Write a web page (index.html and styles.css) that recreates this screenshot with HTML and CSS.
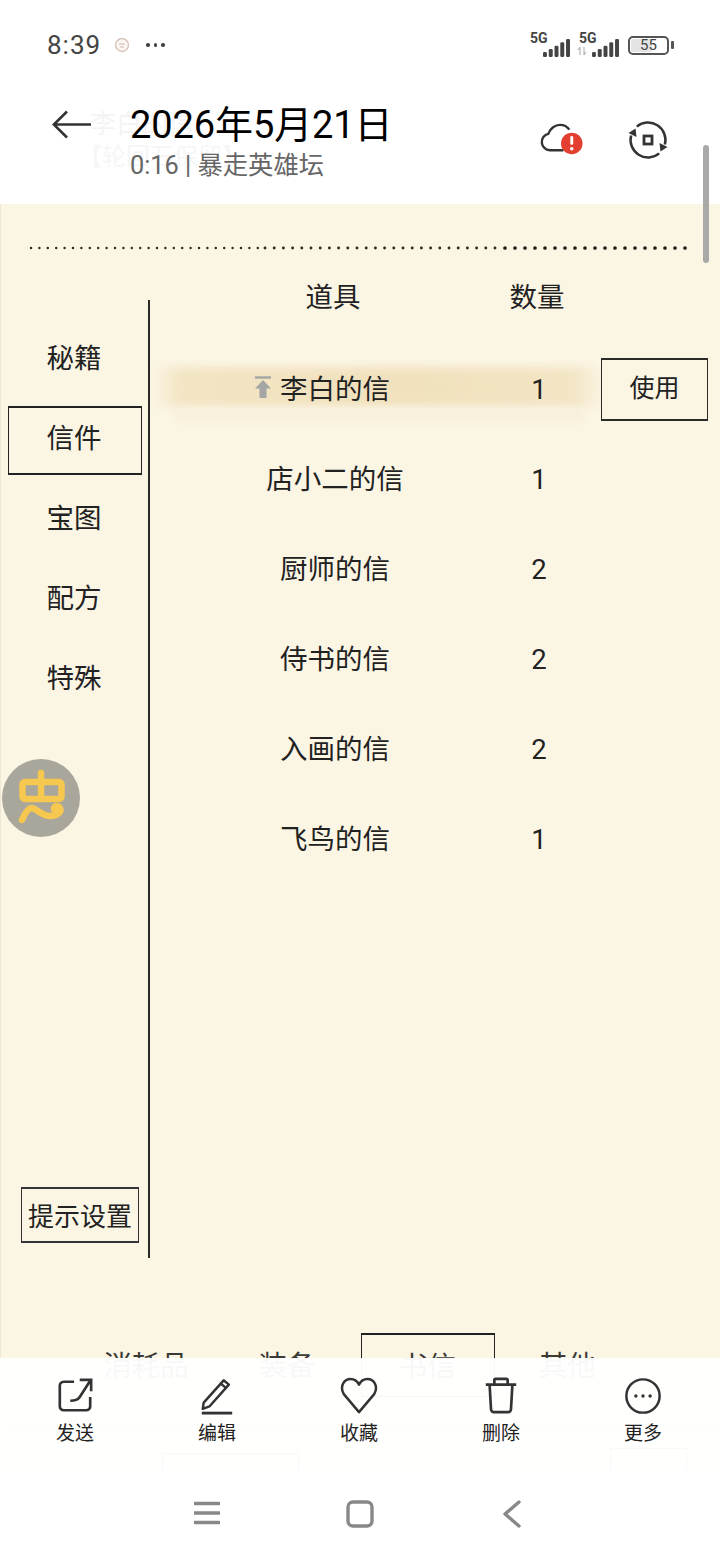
FILE: index.html
```html
<!DOCTYPE html>
<html lang="zh-CN">
<head>
<meta charset="utf-8">
<title>2026年5月21日</title>
<link rel="stylesheet" href="styles.css">
</head>
<body>
<div class="phone">
  <div class="status">
    <div class="status-left">
      <span class="clock">8:39</span>
      <svg class="app-dot" viewBox="0 0 18 18"><circle cx="9" cy="9" r="6.500" fill="#fbf6f2" stroke="#d8c4bc" stroke-width="1.400"/><path d="M6 8h6M7 11h4" stroke="#cfb8ae" stroke-width="1"/></svg>
      <span class="more-dots"><i></i><i></i><i></i></span>
    </div>
    <div class="status-right">
      <span class="sim"><b>5G</b>
        <svg class="bars" viewBox="0 0 30 20"><rect x="0" y="14.500" width="4.400" height="5.500" rx="1.500"/><rect x="6.400" y="11" width="4.400" height="9" rx="1.500"/><rect x="12.800" y="7.500" width="4.400" height="12.500" rx="1.500"/><rect x="19.200" y="3.500" width="4.400" height="16.500" rx="1.500"/><rect x="25.600" y="0" width="4.400" height="20" rx="1.500"/></svg>
      </span>
      <span class="sim"><b>5G</b>
        <svg class="bars" viewBox="0 0 30 20"><rect x="0" y="14.500" width="4.400" height="5.500" rx="1.500"/><rect x="6.400" y="11" width="4.400" height="9" rx="1.500"/><rect x="12.800" y="7.500" width="4.400" height="12.500" rx="1.500"/><rect x="19.200" y="3.500" width="4.400" height="16.500" rx="1.500"/><rect x="25.600" y="0" width="4.400" height="20" rx="1.500"/></svg>
        <svg class="updown" viewBox="0 0 10 10"><path d="M3 1v8M3 1 1 4M7 9V1M7 9l2-3" fill="none" stroke="#b5b5b5" stroke-width="1.200"/></svg>
      </span>
      <span class="battery"><span class="battery-fill"></span><span class="battery-num">55</span></span>
      <span class="battery-cap"></span>
    </div>
  </div>

  <header class="topbar">
    <span class="ghost-title">李白的信</span>
    <span class="ghost-sub">【轮回石保留】</span>
    <svg class="back" viewBox="0 0 40 30"><path d="M39 14.500H2M15 1.500 1.800 14.500 15 27.500" fill="none" stroke="#333" stroke-width="2.600"/></svg>
    <div class="heading">
      <h1>2026年5月21日</h1>
      <p>0:16 | 暴走英雄坛</p>
    </div>
    <div class="top-actions">
      <svg class="cloud" viewBox="0 0 44 32"><path d="M24 27.500H10a8.500 8.500 0 0 1-1.500-16.800C10.500 5 15.500 1.500 20.500 1.500c4 0 7.500 2 9.500 5" fill="none" stroke="#333" stroke-width="2.400"/><circle cx="32.500" cy="20.500" r="11" fill="#e23f30"/><rect x="31" y="13" width="3" height="9" rx="1.400" fill="#fff"/><circle cx="32.500" cy="26" r="1.800" fill="#fff"/></svg>
      <svg class="rotate" viewBox="0 0 40 40"><path d="M8.800 6.600A17.500 17.500 0 0 1 36.900 24.500M31.200 33.400A17.500 17.500 0 0 1 3.100 15.500" fill="none" stroke="#333" stroke-width="2.500"/><path d="M31.500 23 39.500 27 32.500 31.500zM8.500 17 .5 13 7.500 8.500z" fill="#333"/><rect x="16" y="16" width="8" height="8" fill="none" stroke="#333" stroke-width="2.800"/></svg>
    </div>
  </header>

  <main class="game">
    <svg class="dots" viewBox="0 0 662 6" preserveAspectRatio="none">
      <line x1="2" y1="3" x2="230" y2="3" stroke="#2b2a26" stroke-width="2.400" stroke-linecap="round" stroke-dasharray="0 8.400"/>
      <line x1="236" y1="3" x2="470" y2="3" stroke="#2b2a26" stroke-width="2.900" stroke-linecap="round" stroke-dasharray="0 9.200"/>
      <line x1="476" y1="3" x2="661" y2="3" stroke="#1f1e1a" stroke-width="3.700" stroke-linecap="round" stroke-dasharray="0 10"/>
    </svg>
    <div class="columns">
      <nav class="side">
        <ul class="side-list">
          <li class="side-item">秘籍</li>
          <li class="side-item side-active">信件</li>
          <li class="side-item">宝图</li>
          <li class="side-item">配方</li>
          <li class="side-item">特殊</li>
        </ul>
        <div class="hint">提示设置</div>
      </nav>
      <section class="table">
        <div class="row-head">
          <span class="col-name">道具</span>
          <span class="col-num">数量</span>
        </div>
        <div class="row row-selected">
          <span class="wash"></span>
          <span class="wash-low"></span>
          <span class="col-name"><svg class="pin" viewBox="0 0 18 22"><path d="M1 1.500h16" stroke="#a4a6a4" stroke-width="2.400"/><path d="M9 4 17 12.500H12.500V22h-7V12.500H1z" fill="#a4a6a4"/></svg>李白的信</span>
          <span class="col-num">1</span>
          <span class="use">使用</span>
        </div>
        <div class="row"><span class="col-name">店小二的信</span><span class="col-num">1</span></div>
        <div class="row"><span class="col-name">厨师的信</span><span class="col-num">2</span></div>
        <div class="row"><span class="col-name">侍书的信</span><span class="col-num">2</span></div>
        <div class="row"><span class="col-name">入画的信</span><span class="col-num">2</span></div>
        <div class="row"><span class="col-name">飞鸟的信</span><span class="col-num">1</span></div>
      </section>
    </div>
    <div class="tabs">
      <span class="tab">消耗品</span>
      <span class="tab">装备</span>
      <span class="tab tab-active">书信</span>
      <span class="tab">其他</span>
    </div>
    <div class="under-row">
      <span class="under-box under-a"></span>
      <span class="under-box under-b"></span>
    </div>
  </main>

  <svg class="bug" viewBox="0 0 78 78">
    <circle cx="39" cy="39" r="39" fill="#a9a69b"/>
    <path d="M39 14V40M23 23H57a2.500 2.500 0 0 1 2.500 2.500V37.500a2.500 2.500 0 0 1-2.500 2.500H23a2.500 2.500 0 0 1-2.500-2.500V25.500A2.500 2.500 0 0 1 23 23zM20 61C23 54 26 49 30 49 35 50 40 57 48 57 55 57 60 53 58 49 56 46 52 47 52 50" fill="none" stroke="#f6c850" stroke-width="6.500" stroke-linecap="round" stroke-linejoin="round"/>
  </svg>

  <div class="scrollbar"></div>

  <div class="dock">
    <div class="toolbar">
      <div class="tool">
        <svg viewBox="0 0 40 40"><path d="M19 5H8a4 4 0 0 0-4 4v22a4 4 0 0 0 4 4h24a4 4 0 0 0 4-4V21" fill="none" stroke="#333" stroke-width="2.800"/><path d="M15 25c5 0 8-1 10-4L36 4M25 3h12v12" fill="none" stroke="#333" stroke-width="2.800"/></svg>
        <span>发送</span>
      </div>
      <div class="tool">
        <svg viewBox="0 0 40 40"><path d="M6 27 27 3.500l5.500 4.500L12 31l-7 2.500zM24 7l6 5" fill="none" stroke="#333" stroke-width="2.600" stroke-linejoin="round"/><path d="M4 38H36" stroke="#333" stroke-width="3"/></svg>
        <span>编辑</span>
      </div>
      <div class="tool">
        <svg viewBox="0 0 40 40"><path d="M20 37 4 18C-1 9 5 2 11 2c4 0 7 2 9 6 2-4 5-6 9-6 6 0 12 7 7 16z" fill="none" stroke="#333" stroke-width="2.600" stroke-linejoin="round"/></svg>
        <span>收藏</span>
      </div>
      <div class="tool">
        <svg viewBox="0 0 40 40"><path d="M4 8H36M13 8V3.500a1.500 1.500 0 0 1 1.500-1.500h11A1.500 1.500 0 0 1 27 3.500V8M8 8l1.500 26a3 3 0 0 0 3 3h15a3 3 0 0 0 3-3L32 8" fill="none" stroke="#333" stroke-width="2.800"/></svg>
        <span>删除</span>
      </div>
      <div class="tool">
        <svg viewBox="0 0 40 40"><circle cx="20" cy="20" r="17.500" fill="none" stroke="#333" stroke-width="2.600"/><circle cx="12.500" cy="20" r="1.800" fill="#333"/><circle cx="20" cy="20" r="1.800" fill="#333"/><circle cx="27.500" cy="20" r="1.800" fill="#333"/></svg>
        <span>更多</span>
      </div>
    </div>
    <div class="navbar">
      <svg class="nav-menu" viewBox="0 0 26 24"><path d="M1 2.500H25M1 12H25M1 21.500H25" stroke="#888" stroke-width="3.400" stroke-linecap="round"/></svg>
      <svg class="nav-home" viewBox="0 0 28 28"><rect x="2" y="2" width="24" height="24" rx="5" fill="none" stroke="#888" stroke-width="3.400"/></svg>
      <svg class="nav-back" viewBox="0 0 20 28"><path d="M17 2 3 14 17 26" fill="none" stroke="#888" stroke-width="3.400" stroke-linecap="round" stroke-linejoin="round"/></svg>
    </div>
  </div>
</div>
</body>
</html>
```
FILE: styles.css
```css
* { box-sizing: border-box; }
html, body { margin: 0; padding: 0; }
body {
  background: #fff;
  font-family: Roboto, "Noto Sans CJK SC", "Liberation Sans", sans-serif;
  color: #222;
}
.phone {
  position: relative;
  width: 720px;
  height: 1559px;
  overflow: hidden;
  display: flex;
  flex-direction: column;
  background: #fff;
}

/* status bar */
.status {
  height: 90px;
  flex: none;
  display: flex;
  justify-content: space-between;
  align-items: center;
  padding: 0 46px 0 47px;
}
.status-left { display: flex; align-items: center; }
.clock { font-size: 26px; color: #444; letter-spacing: 1px; width: 66px; }
.app-dot { width: 18px; height: 18px; }
.more-dots { display: flex; gap: 4px; margin-left: 15px; }
.more-dots i { width: 3.500px; height: 3.500px; border-radius: 50%; background: #444; }
.status-right { display: flex; align-items: center; }
.sim { position: relative; display: block; width: 41px; height: 22px; margin-right: 8px; }
.sim b {
  position: absolute; left: 0; top: -3px;
  font-size: 14px; line-height: 14px; font-weight: 700; color: #444;
  font-family: Roboto, sans-serif;
}
.bars { position: absolute; right: 0; bottom: -1px; width: 29px; height: 18px; fill: #444; }
.updown { position: absolute; left: -2px; bottom: 0; width: 10px; height: 10px; }
.battery {
  position: relative;
  width: 41px; height: 19px;
  border: 2px solid #555;
  border-radius: 5px;
}
.battery-fill { position: absolute; left: 1px; top: 1px; bottom: 1px; width: 21px; border-radius: 2px; background: #e4e4e4; }
.battery-num { position: absolute; inset: 0; text-align: center; font-size: 15px; line-height: 15px; color: #444; }
.battery-cap { width: 3px; height: 8px; margin-left: 2px; border-radius: 1px; background: #555; }

/* title bar */
.topbar {
  position: relative;
  height: 114px;
  flex: none;
  display: flex;
  align-items: flex-start;
  padding-left: 52px;
}
.ghost-title { position: absolute; left: 90px; top: 16px; font-size: 26px; line-height: 36px; color: #f4f4f4; }
.ghost-sub { position: absolute; left: 78px; top: 50px; font-size: 24px; line-height: 34px; color: #f6f6f6; }
.back { position: relative; width: 40px; height: 30px; margin-top: 20px; flex: none; }
.heading { position: relative; margin-left: 38px; }
.heading h1 {
  margin: 13px 0 0;
  font-size: 38px; line-height: 44px; font-weight: 400; color: #000;
  letter-spacing: -0.100px;
}
.heading p { margin: 3px 0 0; font-size: 25.300px; line-height: 32px; color: #666; }
.top-actions {
  position: absolute; left: 540px; top: 30px;
  display: flex; align-items: flex-start; gap: 46px;
}
.cloud { width: 43px; height: 32px; margin-top: 3px; }
.rotate { width: 40px; height: 40px; margin-left: -1px; }

/* game */
.game {
  flex: 1;
  min-height: 0;
  background: #fbf5e4;
  border-left: 1px solid #eee7d4;
  display: flex;
  flex-direction: column;
  color: #222;
}
.dots { display: block; width: 662px; height: 6px; margin: 41px 0 0 28px; flex: none; }
.columns { display: flex; height: 1082px; flex: none; }
.side {
  width: 149px;
  margin-top: 49px;
  height: 958px;
  border-right: 2px solid #2a2a26;
  display: flex;
  flex-direction: column;
  justify-content: space-between;
  padding-top: 17px;
  padding-bottom: 15px;
}
.side-list { list-style: none; margin: 0; padding: 0; }
.side-item {
  height: 80px;
  display: flex; align-items: center; justify-content: center;
  font-size: 27.500px;
  padding-right: 1px;
  padding-bottom: 2px;
}
.side-active { position: relative; }
.side-active::before {
  content: "";
  position: absolute;
  left: 7px; top: 9px;
  width: 132px; height: 65px;
  border: 1px solid #222;
  border-top-width: 2px;
  border-bottom-width: 2px;
}
.hint {
  width: 118px; height: 56px;
  margin-left: 20px;
  display: flex; align-items: center; justify-content: center;
  border: 1px solid #333;
  border-top-width: 2px;
  border-bottom-width: 2px;
  font-size: 26px;
  padding-bottom: 2px;
  white-space: nowrap;
}
.table { flex: 1; padding-top: 19px; }
.row-head, .row {
  display: grid;
  grid-template-columns: 370px 38px 1fr;
  align-items: center;
  font-size: 27.500px;
}
.row-head { height: 52px; margin-bottom: 20px; padding-bottom: 2px; }
.row-head .col-name { padding-right: 4px; }
.row-head .col-num { margin-left: -30px; margin-right: -30px; padding-right: 4px; }
.row { position: relative; height: 90px; }
.col-name, .col-num { position: relative; text-align: center; white-space: nowrap; }
.row .col-num { padding-top: 4px; }
.pin { position: absolute; margin-left: -26px; margin-top: 9px; width: 18px; height: 22px; }
.wash {
  position: absolute; left: 3px; top: 25px; width: 449px; height: 40px;
  background: linear-gradient(90deg, #fbf5e400, #f3e5c4 6%, #f1e1bd 55%, #f3e5c5 94%, #fbf5e400);
  filter: blur(4px);
}
.wash-low {
  position: absolute; left: 25px; top: 66px; width: 410px; height: 14px;
  background: #f8f0dc;
  filter: blur(3px);
}
.use {
  position: relative;
  justify-self: end;
  margin: 4px 12px 0 0;
  width: 107px; height: 63px;
  background: #fbf5e4;
  display: flex; align-items: center; justify-content: center;
  border: 1px solid #2a2a26;
  border-top-width: 2px;
  border-bottom-width: 2px;
  font-size: 25px;
  padding-bottom: 6px;
}
.tabs {
  display: grid;
  grid-template-columns: 141px 141px 141px 138px;
  margin: 0 0 0 74.500px;
  flex: none;
}
.tab {
  height: 64px;
  display: flex; align-items: center; justify-content: center;
  font-size: 28.500px;
  color: #3a3a36;
  white-space: nowrap;
  padding-bottom: 3px;
}
.tab-active {
  border: 1px solid #222;
  border-top-width: 2px;
  margin: 0 4px 0 3px;
}
.under-row {
  flex: none;
  position: relative;
  border-top: 1px solid #cfc9b8;
  margin-top: 27px;
  height: 60px;
}
.under-box { position: absolute; border: 1px solid #555; border-bottom: 0; height: 40px; }
.under-a { left: 161px; top: 28px; width: 137px; }
.under-b { left: 609px; top: 23px; width: 77px; }

/* floating */
.bug { position: absolute; left: 2px; top: 759px; width: 78px; height: 78px; }
.scrollbar {
  position: absolute; left: 703px; top: 145px;
  width: 6px; height: 118px;
  border-radius: 3px;
  background: #a9a9a7;
}

/* dock */
.dock { position: absolute; left: 0; right: 0; bottom: 0; }
.toolbar {
  height: 112px;
  display: grid;
  grid-template-columns: repeat(5, 142px);
  padding: 19px 0 0 4px;
  background: rgba(255, 255, 255, 0.965);
}
.tool { display: flex; flex-direction: column; align-items: center; }
.tool svg { width: 38px; height: 38px; }
.tool span { margin-top: 6px; font-size: 19px; line-height: 26px; color: #222; }
.navbar {
  height: 89px;
  background: #fff;
  position: relative;
  display: grid;
  grid-template-columns: 26px 28px 20px;
  column-gap: 126px;
  padding: 31px 0 0 194px;
  align-items: start;
}
.nav-menu { width: 26px; height: 24px; }
.nav-home { width: 28px; height: 28px; margin-top: -1px; }
.nav-back { width: 20px; height: 28px; margin-top: -1px; margin-left: 2px; }
```
